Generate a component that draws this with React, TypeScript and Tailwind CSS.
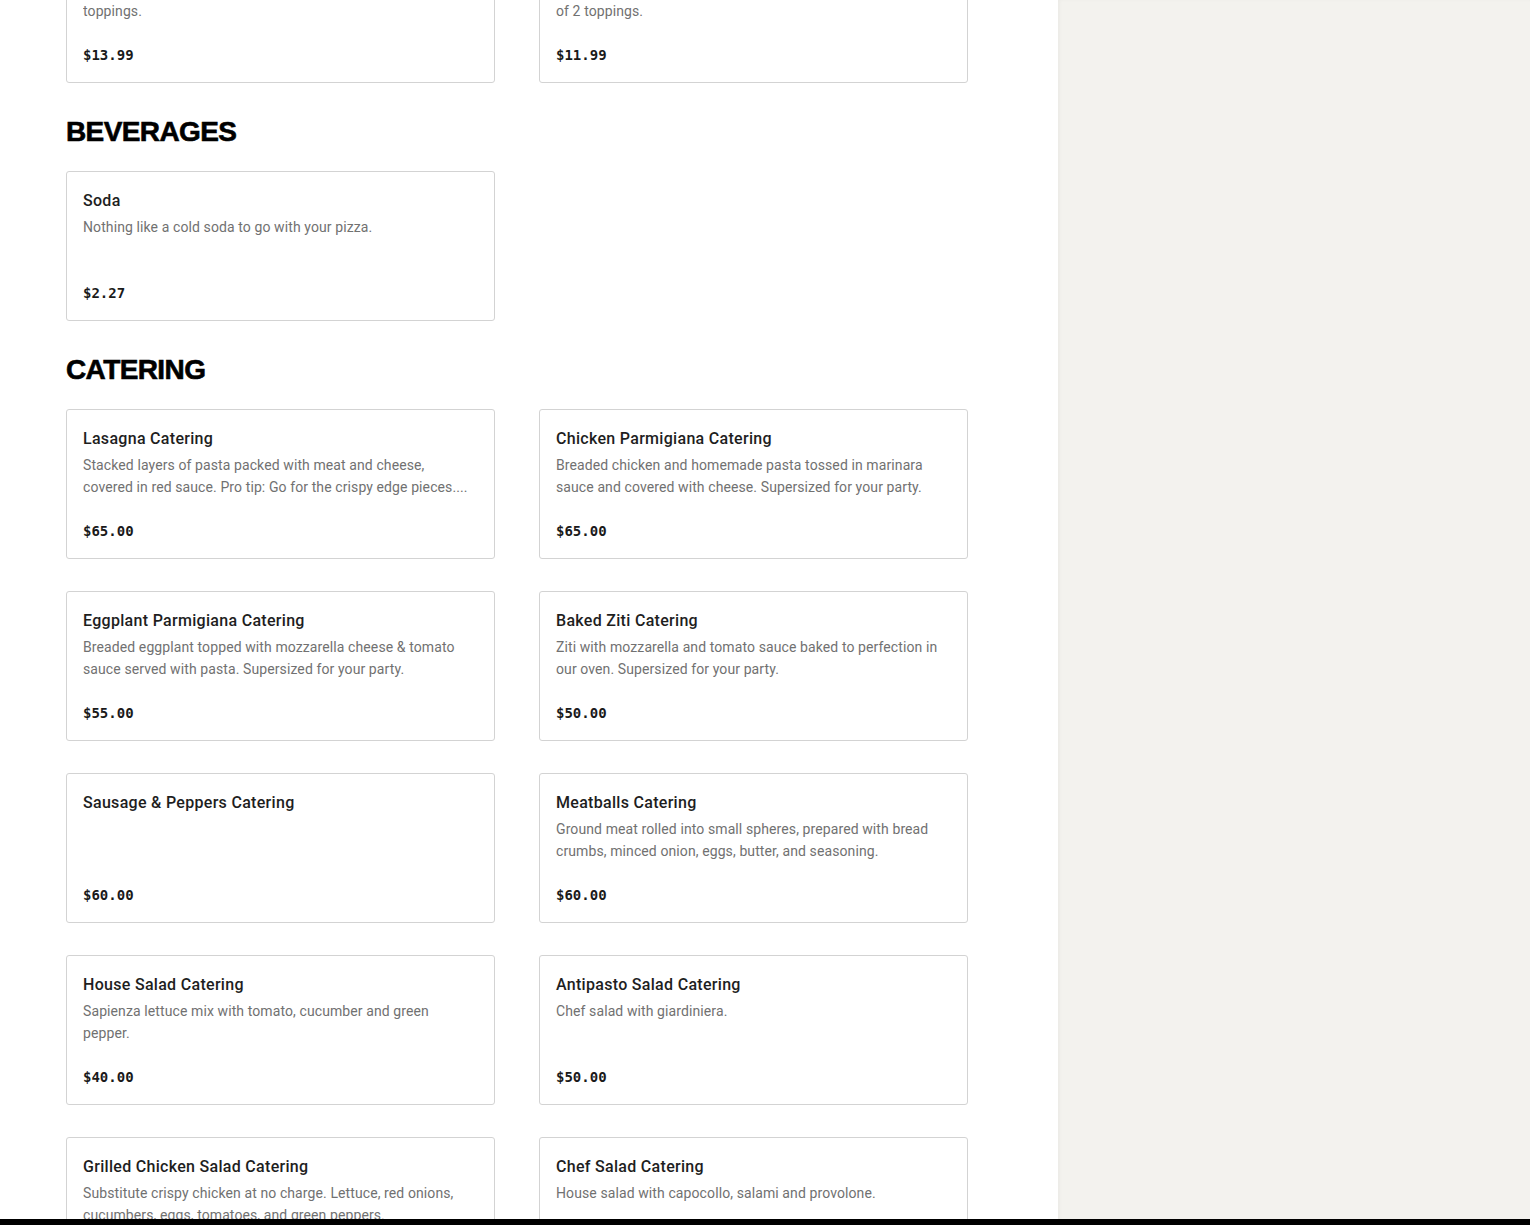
const pizzas = [
  {
    name: "Large Pizza",
    desc: "Hand-tossed large pie with sauce, cheese and your choice of 3\ntoppings.",
    price: "$13.99",
  },
  {
    name: "Medium Pizza",
    desc: "Hand-tossed medium pie with sauce, cheese and your choice\nof 2 toppings.",
    price: "$11.99",
  },
];

const beverages = [
  { name: "Soda", desc: "Nothing like a cold soda to go with your pizza.", price: "$2.27" },
];

const catering = [
  {
    name: "Lasagna Catering",
    desc: "Stacked layers of pasta packed with meat and cheese, covered in red sauce. Pro tip: Go for the crispy edge pieces....",
    price: "$65.00",
  },
  {
    name: "Chicken Parmigiana Catering",
    desc: "Breaded chicken and homemade pasta tossed in marinara sauce and covered with cheese. Supersized for your party.",
    price: "$65.00",
  },
  {
    name: "Eggplant Parmigiana Catering",
    desc: "Breaded eggplant topped with mozzarella cheese & tomato sauce served with pasta. Supersized for your party.",
    price: "$55.00",
  },
  {
    name: "Baked Ziti Catering",
    desc: "Ziti with mozzarella and tomato sauce baked to perfection in our oven. Supersized for your party.",
    price: "$50.00",
  },
  { name: "Sausage & Peppers Catering", desc: "", price: "$60.00" },
  {
    name: "Meatballs Catering",
    desc: "Ground meat rolled into small spheres, prepared with bread crumbs, minced onion, eggs, butter, and seasoning.",
    price: "$60.00",
  },
  {
    name: "House Salad Catering",
    desc: "Sapienza lettuce mix with tomato, cucumber and green pepper.",
    price: "$40.00",
  },
  { name: "Antipasto Salad Catering", desc: "Chef salad with giardiniera.", price: "$50.00" },
  {
    name: "Grilled Chicken Salad Catering",
    desc: "Substitute crispy chicken at no charge. Lettuce, red onions, cucumbers, eggs, tomatoes, and green peppers.",
    price: "$45.00",
  },
  {
    name: "Chef Salad Catering",
    desc: "House salad with capocollo, salami and provolone.",
    price: "$50.00",
  },
];

type Item = { name: string; desc: string; price: string };

const MenuCard = ({ item }: { item: Item }) => (
  <div className="border border-[#d3d3d3] rounded-[3px] bg-white pl-4 pr-[18px] pt-[19px] pb-[17px]">
    <h3 className="text-[16px] leading-5 font-medium tracking-[0.3px] text-[#1e1e1e]">{item.name}</h3>
    <p className="mt-[5px] h-[44px] text-[14px] leading-[22px] tracking-[0.1px] text-[#717171] whitespace-pre-line line-clamp-2">
      {item.desc}
    </p>
    <div className="mt-[23px] font-['DejaVu_Sans_Mono',monospace] text-[14px] leading-5 font-bold text-[#1a1a1a]">
      {item.price}
    </div>
  </div>
);

const Section = ({ title, items }: { title?: string; items: Item[] }) => (
  <section>
    {title && (
      <h2 className="mt-[33px] mb-[23px] font-['Liberation_Sans',Arial,sans-serif] text-[28px] leading-8 font-black tracking-[-0.6px] [-webkit-text-stroke:0.6px_black] text-black">
        {title}
      </h2>
    )}
    <div className="grid grid-cols-[429px_429px] gap-x-[44px] gap-y-8">
      {items.map((item, index) => (
        <MenuCard key={index} item={item} />
      ))}
    </div>
  </section>
);

export default function App() {
  return (
    <div className="h-[1225px] overflow-hidden flex bg-white font-['Roboto','Liberation_Sans',sans-serif]">
      {/* Menu column */}
      <main className="w-[1058px] shrink-0 pl-[66px]">
        <div className="-mt-[67px]">
          <Section items={pizzas} />
          <Section title="BEVERAGES" items={beverages} />
          <Section title="CATERING" items={catering} />
        </div>
      </main>

      {/* Side panel */}
      <aside className="grow bg-[#f3f2ee] shadow-[inset_2px_0_3px_rgba(0,0,0,0.03)]" />

      {/* bottom bar peeking in */}
      <div className="fixed left-0 right-0 bottom-0 h-[6px] bg-black" />
    </div>
  );
}
